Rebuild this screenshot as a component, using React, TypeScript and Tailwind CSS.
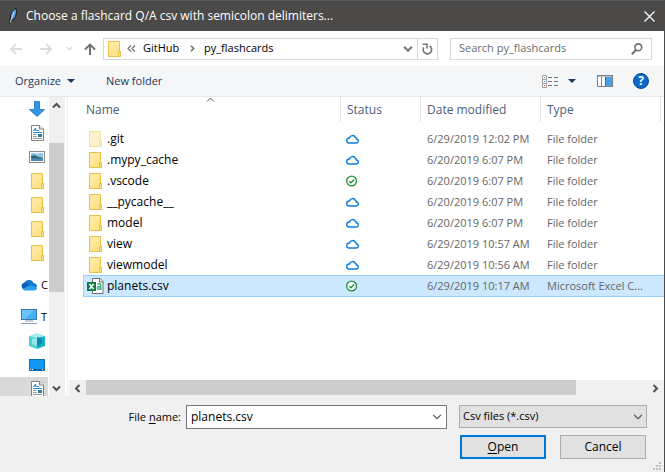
import React, { useState } from "react";

type Status = "cloud" | "synced";
type Entry = { name: string; status: Status; modified: string; type: string; hidden?: boolean; csv?: boolean };

const entries: Entry[] = [
  { name: ".git", status: "cloud", modified: "6/29/2019 12:02 PM", type: "File folder", hidden: true },
  { name: ".mypy_cache", status: "cloud", modified: "6/20/2019 6:07 PM", type: "File folder" },
  { name: ".vscode", status: "synced", modified: "6/20/2019 6:07 PM", type: "File folder" },
  { name: "__pycache__", status: "cloud", modified: "6/20/2019 6:07 PM", type: "File folder" },
  { name: "model", status: "cloud", modified: "6/20/2019 6:07 PM", type: "File folder" },
  { name: "view", status: "cloud", modified: "6/29/2019 10:57 AM", type: "File folder" },
  { name: "viewmodel", status: "cloud", modified: "6/29/2019 10:56 AM", type: "File folder" },
  { name: "planets.csv", status: "synced", modified: "6/29/2019 10:17 AM", type: "Microsoft Excel C...", csv: true },
];

function FolderIcon({ faded = false }: { faded?: boolean }) {
  return (
    <svg width="13" height="16" viewBox="0 0 13 16" className={faded ? "block shrink-0 opacity-50" : "block shrink-0"}>
      <path d="M.5 .5h11v10h1v5H.5z" fill="#ffe48c" stroke="#e8c04c" />
      <path d="M1 1h10v2L1 13z" fill="#ffe9a0" />
      <path d="M10.5 10.5h2v5h-2z" fill="#ffe07a" stroke="#e8c04c" />
    </svg>
  );
}

function CloudIcon() {
  return (
    <svg width="13" height="10" viewBox="0 0 13 10" className="block" fill="none" stroke="#0c7bdc" strokeWidth="1.4">
      <path d="M3 9h7.200a2 2 0 0 0 .3-4A1.500 1.500 0 0 0 9.400 3.500 3.100 3.100 0 0 0 3.500 4 2.500 2.500 0 0 0 3 9z" />
    </svg>
  );
}

function SyncedIcon() {
  return (
    <svg width="12" height="12" viewBox="0 0 12 12" className="block" fill="none" stroke="#1d9137" strokeWidth="1.3">
      <circle cx="5.6" cy="6" r="4.9" fill="#fff" />
      <path d="M3.2 6.2l1.7 1.6 3.2-3.3" />
    </svg>
  );
}

function CsvIcon() {
  return (
    <svg width="17" height="17" viewBox="0 0 17 17" className="block shrink-0">
      <path d="M5.500 .5h7.500l3 3v12h-10.500z" fill="#fff" stroke="#6e6e6e" />
      <path d="M12.500 .5v3.500h3.500" fill="none" stroke="#6e6e6e" />
      <path d="M10.500 5.800h2.200q1 0 1 1V11.200h-2q-1.300 0-1.300-1.200t1.300-1.300h2" fill="none" stroke="#2fb57c" strokeWidth="1.500" />
      <rect x="0" y="4" width="9" height="9" fill="#107c41" />
      <path d="M2.5 6l4 5M6.5 6l-4 5" stroke="#fff" strokeWidth="1.6" />
    </svg>
  );
}

function DownloadsIcon() {
  return (
    <svg width="16" height="16" viewBox="0 0 16 16" className="block">
      <path d="M5.5 .5h5v8h5L8 15.5 .5 8.5h5z" fill="#3296e6" stroke="#2f85cc" />
    </svg>
  );
}

function DocumentsIcon() {
  return (
    <svg width="13" height="16" viewBox="0 0 13 16" className="block">
      <path d="M.5 .5h8l4 3.5v11.5H.5z" fill="#fff" stroke="#808080" />
      <path d="M8.5 .5V4h4" fill="#eee" stroke="#808080" />
      <path d="M2.5 6l2-3 .6 3M3 5h2" fill="none" stroke="#1f86d6" />
      <path d="M6 5.5h2M2 7.5h9" stroke="#1f86d6" />
      <path d="M2 9.5h4M2 11.5h4M2 13.5h9" stroke="#9a9a9a" />
      <rect x="7" y="9" width="4" height="3" fill="#2d7d9a" />
    </svg>
  );
}

function PicturesIcon() {
  return (
    <svg width="16" height="12" viewBox="0 0 16 12" className="block">
      <rect x=".5" y=".5" width="15" height="11" fill="#fff" stroke="#8c8c8c" />
      <rect x="2" y="2" width="12" height="4" fill="#8ec3ef" />
      <path d="M2 5l3-1 5 2 4 .5V8H2z" fill="#2f6b66" />
      <path d="M4 2.500l5 1 3-1z" fill="#dceefa" />
      <path d="M2 7l7 .5 5-.5v3H2z" fill="#4d86b8" />
    </svg>
  );
}

function OneDriveIcon() {
  return (
    <svg width="16" height="12" viewBox="0 0 16 12" className="block">
      <path d="M2 10a3.600 3.600 0 0 1 1.500-6.500A5 5 0 0 1 12.500 4L9 8z" fill="#0a5fb4" />
      <path d="M5 3.500A5 5 0 0 1 12.500 4 4 4 0 0 1 16 8l-5 1z" fill="#0f78d4" />
      <path d="M1.500 10L9.500 6 16 8.500A3 3 0 0 1 13 11.500H4A3.500 3.500 0 0 1 1.500 10z" fill="#28a0e8" />
    </svg>
  );
}

function ComputerIcon() {
  return (
    <svg width="16" height="16" viewBox="0 0 16 16" className="block">
      <rect x=".5" y=".5" width="15" height="10" fill="#45b0fa" stroke="#41799f" />
      <path d="M1 1h12L4 10H1z" fill="#6cc4ff" />
      <path d="M4 12h8" stroke="#8a9aa8" />
      <path d="M0 14.500h16" stroke="#8a9db0" />
    </svg>
  );
}

function ObjectsIcon() {
  return (
    <svg width="16" height="16" viewBox="0 0 16 16" className="block">
      <path d="M0 3l8-3 8 3-8 3z" fill="#a6ecef" />
      <path d="M0 3l8 2v11l-8-3z" fill="#4fcfd4" />
      <path d="M16 3L8 5v11l8-3z" fill="#17b0c8" />
      <path d="M8 4l5 2v5l-5 2z" fill="#0b8bab" />
      <path d="M8 4L3 6v5l5 2z" fill="#93e6e8" />
    </svg>
  );
}

function DesktopIcon() {
  return (
    <svg width="16" height="12" viewBox="0 0 16 12" className="block">
      <rect x=".5" y=".5" width="15" height="11" fill="#1498f5" stroke="#0b6fb8" />
      <path d="M1 10.500h14" stroke="#0a5a9c" />
      <path d="M1 10.500h1M3 10.500h1M13 10.500h1" stroke="#fff" />
    </svg>
  );
}

type ChevronProps = { dir: "up" | "down" | "left" | "right"; className?: string; size?: number; weight?: number };

function Chevron({ dir, className = "", size = 9, weight = 2 }: ChevronProps) {
  const d = { up: "M1 6.500L4.500 3 8 6.500", down: "M1 2.500L4.500 6 8 2.500", left: "M6.500 1L3 4.500 6.500 8", right: "M2.500 1L6 4.500 2.500 8" }[dir];
  return (
    <svg width={size} height={size} viewBox="0 0 9 9" className={"block shrink-0 " + className} fill="none" stroke="currentColor" strokeWidth={weight}>
      <path d={d} />
    </svg>
  );
}

function Triangle() {
  return (
    <svg width="8" height="4" viewBox="0 0 8 4" className="block shrink-0">
      <path d="M0 0h8L4 4z" fill="#1e395b" />
    </svg>
  );
}

function TitleBar() {
  return (
    <header className="flex h-[31px] shrink-0 items-center border-t border-[#5c5c5c] bg-[#4c4a48] pr-[6px] pl-2 text-white">
      <svg width="10" height="16" viewBox="0 0 9 16" className="block shrink-0">
        <path d="M1 15.500L2 9C2 5 5 1 7.500 .5 8.500 3 8 8 5.500 11L3 12z" fill="#5b9be0" stroke="#111" strokeWidth=".9" />
        <path d="M1.500 15L5.500 4" stroke="#d9ecff" strokeWidth=".8" />
      </svg>
      <h1 className="ml-2 flex-1 truncate text-[12px]">Choose a flashcard Q/A csv with semicolon delimiters...</h1>
      <button aria-label="Close" className="flex h-[30px] w-[18px] items-center justify-center">
        <svg width="11" height="11" viewBox="0 0 11 11" fill="none" stroke="#fff" strokeWidth="1.200">
          <path d="M.5 .5l10 10M10.500 .5l-10 10" />
        </svg>
      </button>
    </header>
  );
}

function NavBar() {
  return (
    <nav className="flex h-[35px] shrink-0 items-center bg-white pr-3 pl-[10px]">
      <div className="flex w-[93px] shrink-0 items-center">
        <button aria-label="Back" className="mr-[18px]">
          <svg width="12" height="12" viewBox="0 0 12 12" className="block" fill="none" stroke="#dcdcdc" strokeWidth="1.800">
            <path d="M12 6H1.500M6 1L1 6l5 5" />
          </svg>
        </button>
        <button aria-label="Forward" className="mr-[14px]">
          <svg width="12" height="12" viewBox="0 0 12 12" className="block" fill="none" stroke="#dcdcdc" strokeWidth="1.800">
            <path d="M0 6h10.500M6 1l5 5-5 5" />
          </svg>
        </button>
        <button aria-label="Recent locations" className="mr-[11px] text-[#dcdcdc]">
          <Chevron dir="down" size={7} />
        </button>
        <button aria-label="Up">
          <svg width="12" height="12" viewBox="0 0 12 12" className="block" fill="none" stroke="#6e6e6e" strokeWidth="1.900">
            <path d="M6 12V1.500M1 6.500L6 1.500l5 5" />
          </svg>
        </button>
      </div>
      <div className="flex h-[22px] min-w-0 flex-1 items-center border border-[#d9d9d9] pl-1">
        <FolderIcon />
        <div className="flex flex-1 items-center text-[11px] text-black">
          <span className="ml-1.5 flex w-4 text-[#6e6e6e]">
            <svg width="9" height="7" viewBox="0 0 9 7" fill="none" stroke="currentColor" strokeWidth="1.200">
              <path d="M4 .5l-3 3 3 3M8 .5l-3 3 3 3" />
            </svg>
          </span>
          <a href="#github" className="w-[46px]">GitHub</a>
          <Chevron dir="right" size={7} className="mr-2 text-[#6e6e6e]" />
          <a href="#py_flashcards">py_flashcards</a>
        </div>
        <button aria-label="Previous locations" className="mr-1 text-[#7a7a7a]">
          <Chevron dir="down" size={10} />
        </button>
        <button aria-label="Refresh" className="flex h-5 w-5 items-center justify-center border-l border-[#d9d9d9]">
          <svg width="11" height="12" viewBox="0 0 11 12" className="block" fill="none" stroke="#767676" strokeWidth="1.600">
            <path d="M.5 1.200H5V5.500" />
            <path d="M1.800 4.500A4.200 4.200 0 1 0 7.500 3" />
          </svg>
        </button>
      </div>
      <div className="ml-3 flex h-[22px] w-[202px] items-center border border-[#d9d9d9] pr-2 pl-2">
        <input
          type="search"
          aria-label="Search"
          placeholder="Search py_flashcards"
          className="min-w-0 flex-1 bg-transparent text-[11px] outline-none placeholder:text-[#6d6d6d]"
        />
        <svg width="12" height="12" viewBox="0 0 12 12" className="block" fill="none" stroke="#6e6e6e" strokeWidth="1.600">
          <circle cx="7.300" cy="4.300" r="3.400" />
          <path d="M5 7L.8 11.200" strokeWidth="2" />
        </svg>
      </div>
    </nav>
  );
}

function Toolbar() {
  return (
    <div className="flex h-[31px] shrink-0 items-center border-b border-[#e5e7ea] bg-[#f5f6f8] pr-[15px] pl-[15px] text-[11px] text-[#1e395b]">
      <button className="flex w-[91px] items-center gap-1.5">
        Organize
        <Triangle />
      </button>
      <button>New folder</button>
      <div className="ml-auto flex items-center">
        <button aria-label="Change your view" className="mr-[21px] flex items-center gap-[10px]">
          <svg width="16" height="13" viewBox="0 0 16 13" className="block">
            <path d="M.5 .5h4v12h-4zM.5 4.500h4M.5 8.500h4" fill="#fff" stroke="#a0a0a0" />
            <path d="M2 2.500h1" stroke="#3a8a5f" />
            <path d="M2 6.500h1" stroke="#2b7fe0" />
            <path d="M2 10.500h1" stroke="#d22" />
            <path d="M6 2.500h4M12 2.500h4M6 6.500h4M12 6.500h4M6 10.500h4M12 10.500h4" stroke="#777" />
          </svg>
          <Triangle />
        </button>
        <button aria-label="Show the preview pane" className="mr-5">
          <svg width="16" height="12" viewBox="0 0 16 12" className="block">
            <rect x=".5" y=".5" width="15" height="11" fill="#fff" stroke="#808080" />
            <path d="M0 1h16M4.500 2v9" stroke="#808080" />
            <rect x="9" y="2" width="6" height="9" fill="#47a0ea" />
            <path d="M8.500 2v9" stroke="#2f6da5" />
          </svg>
        </button>
        <button aria-label="Help" className="h-4 w-4 rounded-full border border-[#0a4c94] bg-[#0968c8] text-center text-[12px] leading-[14px] font-bold text-white">
          ?
        </button>
      </div>
    </div>
  );
}

type SideItemProps = { icon: React.ReactNode; label?: string; indent?: boolean; selected?: boolean };

function SideItem({ icon, label, indent = true, selected = false }: SideItemProps) {
  return (
    <li
      className={
        "flex h-6 shrink-0 items-center gap-1 text-[11px] text-black " + (indent ? "pl-[29px] " : "mt-2 pl-[21px] ") + (selected ? "bg-[#d9d9d9]" : "")
      }
    >
      <span className="flex w-4 shrink-0 justify-center">{icon}</span>
      {label}
    </li>
  );
}

function Sidebar() {
  return (
    <aside className="flex w-[68px] shrink-0 border-r border-[#f0f0f0] bg-white">
      <ul className="flex w-12 shrink-0 flex-col overflow-hidden">
        <SideItem icon={<DownloadsIcon />} />
        <SideItem icon={<DocumentsIcon />} />
        <SideItem icon={<PicturesIcon />} />
        <SideItem icon={<FolderIcon />} />
        <SideItem icon={<FolderIcon />} />
        <SideItem icon={<FolderIcon />} />
        <SideItem icon={<FolderIcon />} />
        <SideItem icon={<OneDriveIcon />} label="C" indent={false} />
        <SideItem icon={<ComputerIcon />} label="T" indent={false} />
        <SideItem icon={<ObjectsIcon />} />
        <SideItem icon={<DesktopIcon />} />
        <SideItem icon={<DocumentsIcon />} selected />
      </ul>
      <div className="ml-px flex w-4 flex-col bg-[#f0f0f0] text-[#505050]">
        <div className="flex h-[46px] w-[15px] shrink-0 justify-center pt-1">
          <Chevron dir="up" />
        </div>
        <div className="h-[149px] w-[15px] shrink-0 bg-[#cdcdcd]" />
        <div className="mt-auto flex w-[15px] justify-center pb-[3px]">
          <Chevron dir="down" />
        </div>
      </div>
    </aside>
  );
}

function FileList({ selected, onSelect }: { selected: string; onSelect: (name: string) => void }) {
  const head = "h-[25px] border-r border-[#e5e5e5] p-0 text-left font-normal";
  return (
    <section className="flex min-w-0 flex-1 flex-col bg-white">
      <div className="min-h-0 flex-1 overflow-hidden pl-[15px]">
        <table className="w-full table-fixed border-separate border-spacing-0 text-[11px] leading-4 text-[#666666]">
          <colgroup>
            <col />
            <col className="w-20" />
            <col className="w-[120px]" />
            <col className="w-[120px]" />
            <col className="w-[3px]" />
          </colgroup>
          <thead className="text-[#4c607a]">
            <tr className="text-[12px]">
              <th className={head + " relative pl-[3px]"}>
                Name
                <Chevron dir="up" className="absolute -top-0.5 left-[123px] text-[#555]" weight={1} />
              </th>
              <th className={head + " pl-1.5"}>Status</th>
              <th className={head + " pl-1.5"}>Date modified</th>
              <th className={head + " pl-1.5"}>Type</th>
              <td />
            </tr>
            <tr aria-hidden="true">
              <td className="h-1.5 p-0" colSpan={5} />
            </tr>
          </thead>
          <tbody>
            {entries.map((e) => {
              const on = e.name === selected;
              const cell = on ? "h-[22px] border-y border-[#99d1ff] bg-[#cce8ff] p-0 whitespace-nowrap " : "h-[21px] p-0 whitespace-nowrap ";
              return (
                <tr key={e.name} onClick={() => onSelect(e.name)}>
                  <td className={cell + (on ? "border-l" : "")}>
                    <div className="flex items-center text-[12px] text-black">
                      <span className={on ? "flex w-[23px] pl-[3px]" : "flex w-6 pl-1.5"}>{e.csv ? <CsvIcon /> : <FolderIcon faded={e.hidden} />}</span>
                      {e.name}
                    </div>
                  </td>
                  <td className={cell + "pl-[5px]"}>{e.status === "cloud" ? <CloudIcon /> : <SyncedIcon />}</td>
                  <td className={cell + "pl-1.5"}>{e.modified}</td>
                  <td className={cell + "pl-1.5"}>{e.type}</td>
                  <td className={cell} />
                </tr>
              );
            })}
          </tbody>
        </table>
      </div>
      <div className="ml-px flex h-4 shrink-0 items-center bg-[#f0f0f0] text-[#505050]">
        <span className="flex w-[17px] pl-1">
          <Chevron dir="left" />
        </span>
        <div className="mr-2 flex flex-1 self-stretch">
          <div className="h-[15px] w-[88%] bg-[#cdcdcd]" />
        </div>
        <Chevron dir="right" className="mr-1" />
      </div>
    </section>
  );
}

function Footer({ fileName, onChange }: { fileName: string; onChange: (name: string) => void }) {
  return (
    <footer className="relative flex h-[76px] shrink-0 flex-col gap-1.5 bg-[#f0f0f0] pt-[9px] pr-[17px] text-[12px] text-black">
      <div className="flex h-6 items-start">
        <label htmlFor="file-name" className="w-[181px] shrink-0 text-right text-[11px] leading-6">
          File <span className="underline underline-offset-2">n</span>ame:
        </label>
        <div className="ml-[5px] flex h-6 min-w-0 flex-1 items-center border border-[#7a7a7a] bg-white pr-1 pl-1">
          <input id="file-name" value={fileName} onChange={(e) => onChange(e.target.value)} className="min-w-0 flex-1 outline-none" />
          <button aria-label="Previous file names" className="text-[#505050]">
            <Chevron dir="down" size={10} weight={1} />
          </button>
        </div>
        <div className="relative ml-3 h-[23px] w-[188px]">
          <select aria-label="File type" className="h-full w-full appearance-none border border-[#adadad] bg-[#e1e1e1] pl-[3px] text-[11px] outline-none">
            <option>Csv files (*.csv)</option>
          </select>
          <Chevron dir="down" size={10} weight={1} className="pointer-events-none absolute top-[7px] right-1 text-[#505050]" />
        </div>
      </div>
      <div className="flex justify-end gap-[14px] pr-px">
        <button className="h-6 w-[86px] border-2 border-[#0078d7] bg-[#e1e1e1] leading-5">
          <span className="underline underline-offset-2">O</span>pen
        </button>
        <button className="h-6 w-[86px] border border-[#adadad] bg-[#e1e1e1] leading-5">Cancel</button>
      </div>
      <svg width="8" height="8" viewBox="0 0 8 8" className="absolute right-[3px] bottom-0.5" fill="#bfbfbf">
        <path d="M6 0h2v2H6zM3 3h2v2H3zM6 3h2v2H6zM0 6h2v2H0zM3 6h2v2H3zM6 6h2v2H6z" />
      </svg>
    </footer>
  );
}

export default function App() {
  const [fileName, setFileName] = useState("planets.csv");
  const [selected, setSelected] = useState("planets.csv");
  return (
    <div className="flex h-screen w-full flex-col overflow-hidden border-r border-[#4c4a48] bg-white font-['Open_Sans','Noto_Sans',sans-serif]">
      <TitleBar />
      <NavBar />
      <Toolbar />
      <main className="flex min-h-0 flex-1">
        <Sidebar />
        <FileList
          selected={selected}
          onSelect={(name) => {
            setSelected(name);
            setFileName(name);
          }}
        />
      </main>
      <Footer fileName={fileName} onChange={setFileName} />
    </div>
  );
}
